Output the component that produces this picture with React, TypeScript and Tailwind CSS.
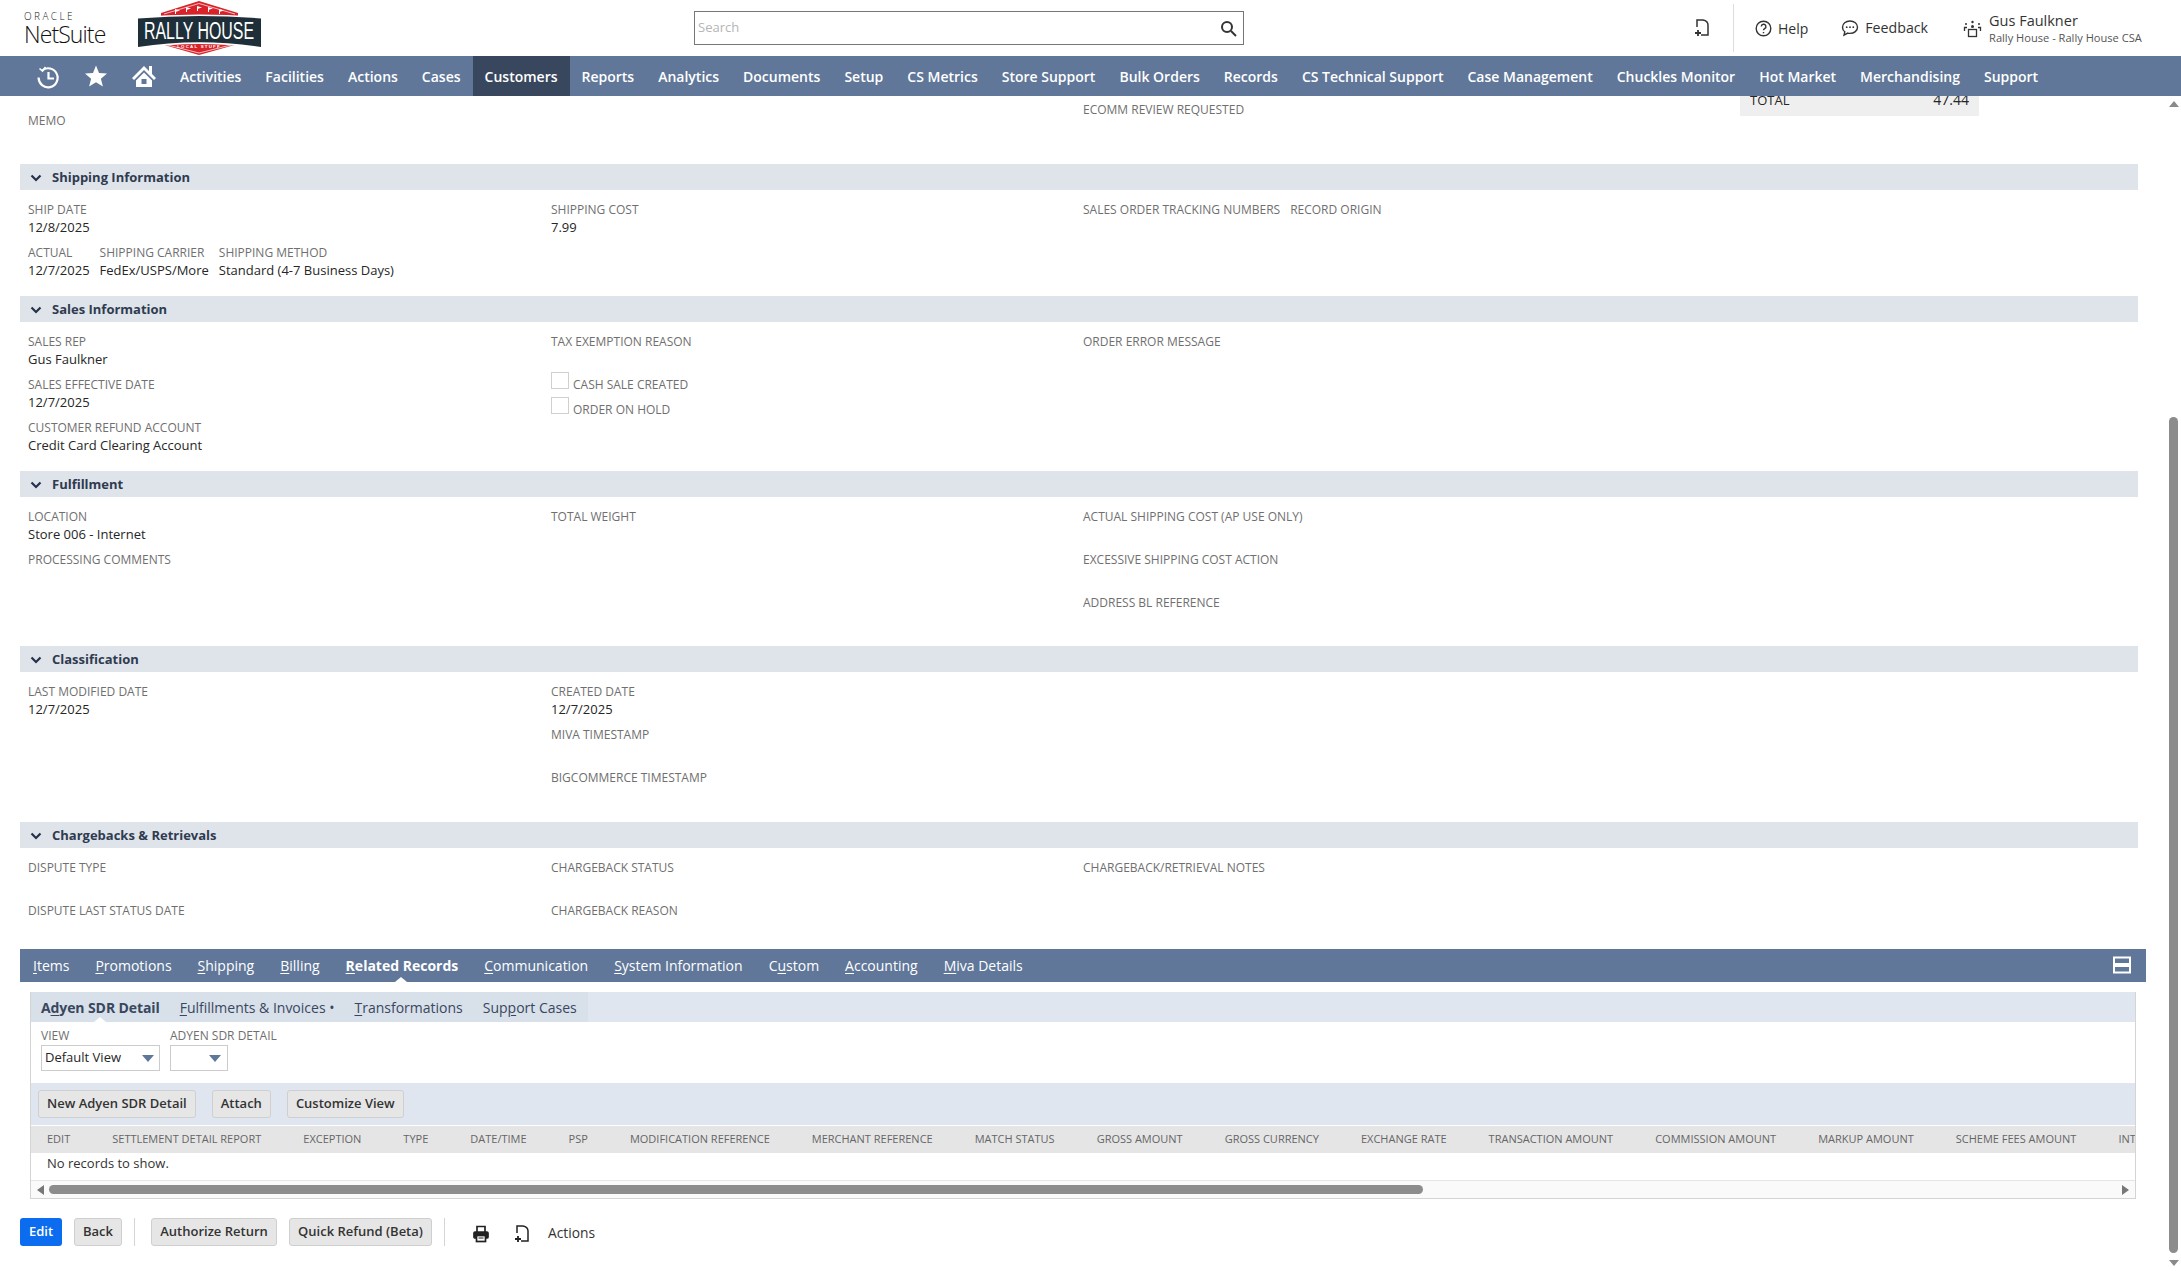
import React from "react";

const font = { fontFamily: '"Open Sans", "Noto Sans", sans-serif' };

function Label({ children, className = "" }: { children: React.ReactNode; className?: string }) {
  return <div className={`h-[18px] text-[12px] leading-[18px] whitespace-nowrap text-[#6f6f6f] ${className}`}>{children}</div>;
}
function Value({ children }: { children: React.ReactNode }) {
  return <div className="h-[18px] text-[13px] leading-[18px] whitespace-nowrap text-[#262626]">{children}</div>;
}
function Field({ label, value }: { label: string; value?: string }) {
  return (
    <div className="h-[43px]">
      <div className="h-[18px] pt-px text-[12px] leading-[18px] whitespace-nowrap text-[#6f6f6f]">{label}</div>
      {value && <Value>{value}</Value>}
    </div>
  );
}
function Check({ label, tall }: { label: string; tall?: boolean }) {
  return (
    <div className={`flex items-start gap-[4px] ${tall ? "-mt-[3px] h-[25px]" : "h-[26px]"}`}>
      <div className="h-[17px] w-[18px] border border-[#d0d0d0] bg-white" />
      <div className="mt-[4px] h-[18px] text-[12px] leading-[18px] whitespace-nowrap text-[#6f6f6f]">{label}</div>
    </div>
  );
}
function Section({ title, children, pb = "pb-[10px]" }: { title: string; children: React.ReactNode; pb?: string }) {
  return (
    <section>
      <div className="mr-[8px] flex h-[26px] items-center bg-[#dfe4eb] pt-px pl-[9px]">
        <svg width="14" height="14" viewBox="0 0 14 14" className="mr-[9px]">
          <path d="M2.5 4.5 7 9l4.5-4.5" fill="none" stroke="#25324a" strokeWidth="2.2" />
        </svg>
        <span className="text-[13px] font-bold text-[#2f3b4f]">{title}</span>
      </div>
      <div className={`grid grid-cols-[523px_532px_1fr] pt-[10px] pl-[8px] ${pb}`}>{children}</div>
    </section>
  );
}
function U({ children }: { children: React.ReactNode }) {
  return <span className="underline underline-offset-2">{children}</span>;
}

function PagePlus({ color = "#333" }: { color?: string }) {
  return (
    <svg width="18" height="20" viewBox="0 0 18 20" fill="none" stroke={color} strokeWidth="1.5">
      <path d="M4 9V2h6q5 1 5 5v10H8" />
      <path d="M5 12v6M2 15h6" strokeWidth="1.8" />
    </svg>
  );
}
function Triangle({ className = "" }: { className?: string }) {
  return <div className={`h-0 w-0 border-x-[6px] border-t-[7px] border-x-transparent border-t-[#5f7899] ${className}`} />;
}

const NAV = ["Activities", "Facilities", "Actions", "Cases", "Customers", "Reports", "Analytics", "Documents", "Setup", "CS Metrics", "Store Support", "Bulk Orders", "Records", "CS Technical Support", "Case Management", "Chuckles Monitor", "Hot Market", "Merchandising", "Support"];
const COLS = ["EDIT", "SETTLEMENT DETAIL REPORT", "EXCEPTION", "TYPE", "DATE/TIME", "PSP", "MODIFICATION REFERENCE", "MERCHANT REFERENCE", "MATCH STATUS", "GROSS AMOUNT", "GROSS CURRENCY", "EXCHANGE RATE", "TRANSACTION AMOUNT", "COMMISSION AMOUNT", "MARKUP AMOUNT", "SCHEME FEES AMOUNT", "INTERCHANGE"];

function Logo() {
  return (
    <svg width="126" height="56" viewBox="0 0 126 56" className="ml-[33px]">
      <path d="M24 13 L62 1 L101 13 L101 44 L62 55 L24 44 Z" fill="#d8232a" />
      <path d="M27 14 L62 3.500 L98 14" fill="none" stroke="#fff" strokeWidth="0.7" />
      <path d="M27 44 L62 53 L98 44" fill="none" stroke="#fff" strokeWidth="0.7" />
      <path d="M0 17 Q62 12 125 17 L125 49 Q62 39 0 49 Z" fill="#fff" />
      <path d="M1 18.500 Q62 13.500 124 18.500 L124 47 Q62 37.500 1 47 Z" fill="#1e2f3a" />
      <g fill="#fff">
        <path d="M38 14V9l5 1.500-4 1.200V14zM49 12V7l5 1.500-4 1.200V12zM60 11V6l5 1.500-4 1.200V11zM71 12V7l5 1.500-4 1.200V12zM82 14V9l5 1.500-4 1.200V14z" />
      </g>
      <text x="7" y="39" fill="#fff" fontFamily="Liberation Sans, sans-serif" fontWeight="400" fontSize="23" textLength="110" lengthAdjust="spacingAndGlyphs">RALLY HOUSE</text>
      <text x="62" y="47.500" textAnchor="middle" fill="#fff" fontFamily="Liberation Sans, sans-serif" fontWeight="700" fontSize="4.400" letterSpacing="1.200">LOCAL STUFF</text>
    </svg>
  );
}

export default function App() {
  return (
    <div className="flex h-[1271px] w-[2181px] flex-col overflow-hidden bg-white" style={font}>
      {/* Header */}
      <header className="flex h-[56px] shrink-0 items-center">
        <div className="ml-[24px] w-[80px] text-[#222]">
          <div className="text-[10px] leading-[11px] tracking-[2.400px] font-light text-[#222]">ORACLE</div>
          <div className="text-[23px] leading-[24px] font-light tracking-[-0.9px] text-[#111]">NetSuite</div>
        </div>
        <Logo />
        <div className="ml-[431px] flex h-[34px] w-[550px] items-center justify-between border border-[#777] pr-[6px] pl-[3px]">
          <span className="text-[13px] text-[#b5b5b5]">Search</span>
          <svg width="17" height="17" viewBox="0 0 17 17" fill="none" stroke="#333" strokeWidth="2">
            <circle cx="7" cy="7" r="5" />
            <path d="m11 11 5 5" />
          </svg>
        </div>
        <div className="ml-[449px]"><PagePlus /></div>
        <div className="ml-[22px] h-[48px] w-px bg-[#ddd]" />
        <div className="ml-[21px] flex items-center gap-[6px] text-[14px] text-[#333]">
          <svg width="17" height="17" viewBox="0 0 17 17" fill="none" stroke="#333" strokeWidth="1.4">
            <circle cx="8.5" cy="8.5" r="7.3" />
            <path d="M6.3 6.6a2.3 2.3 0 1 1 3.4 2c-.8.5-1.2.9-1.2 1.7" />
            <path d="M8.5 12v1.3" />
          </svg>
          Help
        </div>
        <div className="ml-[33px] flex items-center gap-[6px] text-[14.200px] text-[#333]">
          <svg width="18" height="18" viewBox="0 0 18 18" fill="none" stroke="#333" strokeWidth="1.4">
            <path d="M9 2c4.2 0 7.5 2.7 7.5 6.2S13.2 14.4 9 14.4c-.8 0-1.5-.1-2.2-.3L3 16.2l.8-3.4C2.300 11.700 1.500 10 1.500 8.200 1.500 4.700 4.800 2 9 2z" />
            <circle cx="5.700" cy="8.200" r=".9" fill="#333" stroke="none" />
            <circle cx="9" cy="8.200" r=".9" fill="#333" stroke="none" />
            <circle cx="12.300" cy="8.200" r=".9" fill="#333" stroke="none" />
          </svg>
          Feedback
        </div>
        <div className="ml-[35px] flex items-center gap-[7px]">
          <svg width="19" height="19" viewBox="0 0 19 19" fill="none" stroke="#333" strokeWidth="1.3">
            <circle cx="9.500" cy="3" r="1.200" fill="#333" stroke="none" />
            <circle cx="3" cy="5" r="1" fill="#333" stroke="none" />
            <circle cx="16" cy="5" r="1" fill="#333" stroke="none" />
            <circle cx="9.500" cy="7.500" r="1.500" fill="#333" stroke="none" />
            <rect x="5.500" y="10.500" width="8" height="7" />
            <path d="M1.500 12V8.500h2.500M17.500 12V8.500H15" />
          </svg>
          <div className="pt-[2px]">
            <div className="text-[14.500px] leading-[18px] text-[#333]">Gus Faulkner</div>
            <div className="text-[11.100px] leading-[16px] text-[#555]">Rally House - Rally House CSA</div>
          </div>
        </div>
      </header>

      {/* Nav */}
      <nav className="flex h-[40px] shrink-0 items-center bg-[#607799] pl-[36px] text-[14px] font-semibold text-white">
        <div className="flex w-[48px] justify-start">
          <svg width="24" height="26" viewBox="0 0 24 26" fill="none" stroke="#fff" strokeWidth="2.200">
            <path d="M6 7.500a9.500 9.500 0 1 1-3.400 7" />
            <path d="M12.500 9v6.500H18" />
            <path d="M3.500 5.500 6.500 8l3-4" strokeWidth="1.600" />
          </svg>
        </div>
        <div className="flex w-[47px] justify-start">
          <svg width="24" height="24" viewBox="0 0 24 24" fill="#fff">
            <path d="M12 1.500 15 9l8 .6-6.100 5.100 2 7.800L12 18.200 5.100 22.500l2-7.800L1 9.600 9 9z" />
          </svg>
        </div>
        <div className="w-[37px] shrink-0">
          <svg width="26" height="26" viewBox="0 0 26 26" fill="#fff">
            <path d="M13 3 1 15l2 2L13 7l10 10 2-2-4-4V3h-3v5z" />
            <path d="M5 17.500 13 9.500l8 8V24H5zM10.500 16v5h5v-5z" fillRule="evenodd" />
          </svg>
        </div>
        {NAV.map((n) => (
          <div key={n} className={`flex h-[40px] items-center px-[12px] whitespace-nowrap ${n === "Customers" ? "bg-[#39475e]" : ""}`}>{n}</div>
        ))}
      </nav>

      <div className="flex min-h-0 flex-1">
        {/* Main */}
        <main className="min-w-0 flex-1 pl-[20px]">
          <div className="grid h-[68px] grid-cols-[523px_532px_657px_239px] pl-[8px]">
            <div className="pt-[15px]"><Field label="MEMO" /></div>
            <div />
            <div className="pt-[4px]"><Field label="ECOMM REVIEW REQUESTED" /></div>
            <div className="flex h-[20px] items-start justify-between overflow-hidden bg-[#efefef] px-[10px] leading-[18px] text-[#262626]">
              <span className="-mt-[5px] text-[13px]">TOTAL</span>
              <span className="-mt-[5px] text-[14px]">47.44</span>
            </div>
          </div>

          <Section title="Shipping Information">
            <div>
              <Field label="SHIP DATE" value="12/8/2025" />
              <div className="flex gap-[10px]">
                <Field label="ACTUAL" value="12/7/2025" />
                <Field label="SHIPPING CARRIER" value="FedEx/USPS/More" />
                <Field label="SHIPPING METHOD" value="Standard (4-7 Business Days)" />
              </div>
            </div>
            <Field label="SHIPPING COST" value="7.99" />
            <div className="flex gap-[10px]">
              <Field label="SALES ORDER TRACKING NUMBERS" />
              <Field label="RECORD ORIGIN" />
            </div>
          </Section>

          <Section title="Sales Information">
            <div>
              <Field label="SALES REP" value="Gus Faulkner" />
              <Field label="SALES EFFECTIVE DATE" value="12/7/2025" />
              <Field label="CUSTOMER REFUND ACCOUNT" value="Credit Card Clearing Account" />
            </div>
            <div>
              <Field label="TAX EXEMPTION REASON" />
              <Check label="CASH SALE CREATED" tall />
              <Check label="ORDER ON HOLD" />
            </div>
            <Field label="ORDER ERROR MESSAGE" />
          </Section>

          <Section title="Fulfillment">
            <div>
              <Field label="LOCATION" value="Store 006 - Internet" />
              <Field label="PROCESSING COMMENTS" />
              <div className="h-[43px]" />
            </div>
            <Field label="TOTAL WEIGHT" />
            <div>
              <Field label="ACTUAL SHIPPING COST (AP USE ONLY)" />
              <Field label="EXCESSIVE SHIPPING COST ACTION" />
              <Field label="ADDRESS BL REFERENCE" />
            </div>
          </Section>

          <Section title="Classification" pb="pb-[11px]">
            <Field label="LAST MODIFIED DATE" value="12/7/2025" />
            <div>
              <Field label="CREATED DATE" value="12/7/2025" />
              <Field label="MIVA TIMESTAMP" />
              <Field label="BIGCOMMERCE TIMESTAMP" />
            </div>
            <div />
          </Section>

          <Section title="Chargebacks & Retrievals" pb="pb-[5px]">
            <div>
              <Field label="DISPUTE TYPE" />
              <Field label="DISPUTE LAST STATUS DATE" />
            </div>
            <div>
              <Field label="CHARGEBACK STATUS" />
              <Field label="CHARGEBACK REASON" />
            </div>
            <Field label="CHARGEBACK/RETRIEVAL NOTES" />
          </Section>

          {/* Tabs */}
          <div className="relative flex h-[33px] items-center gap-[26px] bg-[#607799] pl-[13px] text-[14px] text-white">
            <span><U>I</U>tems</span>
            <span><U>P</U>romotions</span>
            <span><U>S</U>hipping</span>
            <span><U>B</U>illing</span>
            <span className="relative font-bold"><U>R</U>elated Records</span>
            <span><U>C</U>ommunication</span>
            <span><U>S</U>ystem Information</span>
            <span>C<U>u</U>stom</span>
            <span><U>A</U>ccounting</span>
            <span><U>M</U>iva Details</span>
            <div className="absolute bottom-0 left-[375px] h-0 w-0 border-x-[6px] border-b-[5px] border-x-transparent border-b-white" />
            <svg width="18" height="18" viewBox="0 0 18 18" className="absolute top-[7px] right-[15px]" fill="none" stroke="#fff" strokeWidth="2">
              <rect x="1" y="1.500" width="16" height="6.500" />
              <rect x="1" y="10" width="16" height="6.500" />
            </svg>
          </div>

          {/* Subtab panel */}
          <div className="mt-[10px] mr-[10px] ml-[10px] border-r border-b border-l border-[#d4d4d4]">
            <div className="h-[30px] bg-[#e0e6ef]">
              <div className="relative flex h-[30px] w-[557px] items-center gap-[20px] bg-[#d8e0ea] pl-[10px] text-[14px] text-[#39475e]">
                <span className="font-bold tracking-[-0.1px]"><span>A</span><U>d</U>yen SDR Detail</span>
                <span><U>F</U>ulfillments &amp; Invoices •</span>
                <span><U>T</U>ransformations</span>
                <span>Sup<U>p</U>ort Cases</span>
                <div className="absolute bottom-0 left-[63px] h-0 w-0 border-x-[6px] border-b-[5px] border-x-transparent border-b-white" />
              </div>
            </div>

            <div className="flex h-[61px] gap-[10px] bg-white pt-[5px] pl-[10px]">
              <div>
                <Label className="h-[17px] leading-[17px]">VIEW</Label>
                <div className="flex h-[26px] w-[119px] items-center justify-between border border-[#ccc] pr-[5px] pl-[3px] text-[13px] text-[#262626]">
                  Default View
                  <Triangle />
                </div>
              </div>
              <div>
                <Label className="h-[17px] leading-[17px]">ADYEN SDR DETAIL</Label>
                <div className="flex h-[26px] w-[58px] items-center justify-end border border-[#ccc] pr-[6px]">
                  <Triangle />
                </div>
              </div>
            </div>

            <div className="flex h-[42px] items-center gap-[16px] bg-[#e0e6ef] pl-[7px] text-[13px] text-[#333]">
              <div className="flex h-[28px] items-center rounded-[3px] border border-[#cfcfcf] bg-[#e6e6e6] px-[8px] font-semibold">New Adyen SDR Detail</div>
              <div className="flex h-[28px] items-center rounded-[3px] border border-[#cfcfcf] bg-[#e6e6e6] px-[8px] font-semibold">Attach</div>
              <div className="flex h-[28px] items-center rounded-[3px] border border-[#cfcfcf] bg-[#e6e6e6] px-[8px] font-semibold">Customize View</div>
            </div>

            <div className="mt-px flex h-[27px] items-center gap-[42px] overflow-hidden bg-[#e5e5e5] pl-[16px] text-[11px] whitespace-nowrap text-[#666]">
              {COLS.map((c) => <span key={c}>{c}</span>)}
            </div>
            <div className="flex h-[28px] items-center border-b border-[#e5e5e5] pb-[6px] pl-[16px] text-[13px] text-[#333]">No records to show.</div>
            <div className="flex h-[17px] items-center bg-[#fafafa] px-[6px]">
              <div className="h-0 w-0 border-y-[5px] border-r-[7px] border-y-transparent border-r-[#777]" />
              <div className="ml-[5px] h-[9px] w-[1374px] rounded-full bg-[#8c8c8c]" />
              <div className="ml-auto h-0 w-0 border-y-[5px] border-l-[7px] border-y-transparent border-l-[#777]" />
            </div>
          </div>

          {/* Footer */}
          <div className="mt-[19px] flex items-center text-[13px] text-[#333]">
            <div className="flex h-[28px] w-[42px] items-center justify-center rounded-[3px] bg-[#0b6cf0] font-semibold text-white">Edit</div>
            <div className="ml-[12px] flex h-[28px] w-[48px] items-center justify-center rounded-[3px] border border-[#cfcfcf] bg-[#e6e6e6] font-semibold">Back</div>
            <div className="ml-[12px] h-[28px] w-px bg-[#d5d5d5]" />
            <div className="ml-[16px] flex h-[28px] w-[126px] items-center justify-center rounded-[3px] border border-[#cfcfcf] bg-[#e6e6e6] font-semibold">Authorize Return</div>
            <div className="ml-[12px] flex h-[28px] w-[143px] items-center justify-center rounded-[3px] border border-[#cfcfcf] bg-[#e6e6e6] font-semibold">Quick Refund (Beta)</div>
            <div className="ml-[12px] h-[28px] w-px bg-[#d5d5d5]" />
            <svg width="18" height="18" viewBox="0 0 18 18" className="mt-[3px] ml-[27px]" fill="none" stroke="#222" strokeWidth="1.700">
              <path d="M5 7V1.500h8V7" />
              <rect x="2" y="7" width="14" height="6" rx="1" fill="#222" />
              <rect x="4.500" y="10.500" width="9" height="6" fill="#fff" />
              <path d="M6.500 13h5" strokeWidth="1" />
            </svg>
            <div className="mt-[3px] ml-[23px]"><PagePlus color="#222" /></div>
            <span className="mt-[3px] ml-[17px] text-[13.800px]">Actions</span>
          </div>
        </main>

        {/* Page scrollbar */}
        <div className="flex w-[35px] shrink-0 flex-col items-center pt-[5px] pl-[20px]">
          <div className="h-0 w-0 shrink-0 border-x-[5px] border-b-[6px] border-x-transparent border-b-[#8a8a8a]" />
          <div className="mt-[310px] h-[836px] w-[9px] shrink-0 rounded-full bg-[#8c8c8c]" />
          <div className="mt-[7px] h-0 w-0 shrink-0 border-x-[5px] border-t-[6px] border-x-transparent border-t-[#8a8a8a]" />
        </div>
      </div>
    </div>
  );
}
